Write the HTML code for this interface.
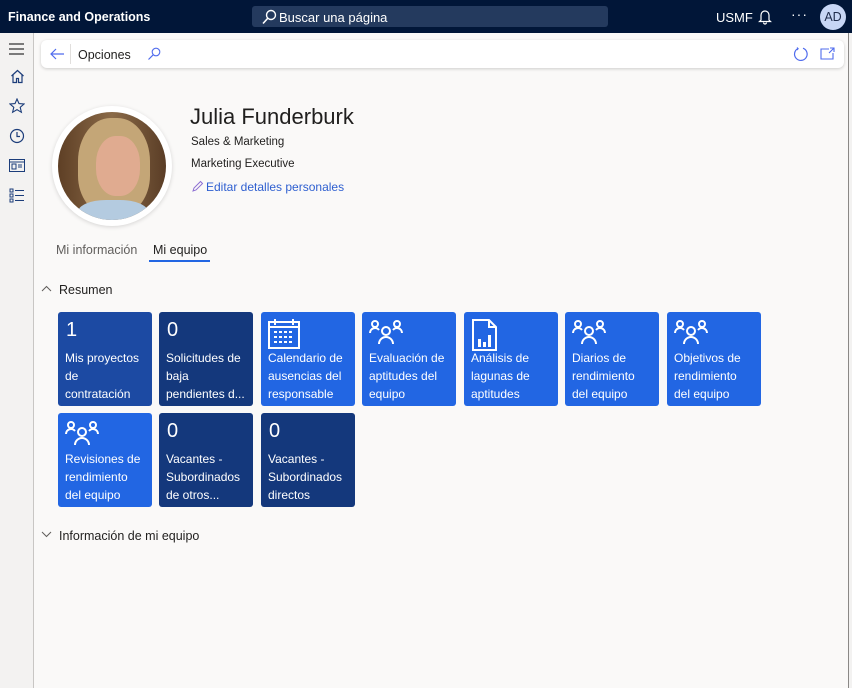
<!DOCTYPE html>
<html><head><meta charset="utf-8"><style>
*{box-sizing:border-box;margin:0;padding:0}
body{width:852px;height:688px;overflow:hidden;background:#faf9f8;font-family:"Liberation Sans",sans-serif;position:relative;color:#201f1e}
.top{position:absolute;left:0;top:0;width:852px;height:33px;background:#011638;color:#fff}
.abs{position:absolute}
.side{position:absolute;left:0;top:33px;width:34px;height:655px;background:#f3f2f1;border-right:1px solid #c8c6c4}
.bar{position:absolute;left:41px;top:40px;width:803px;height:28px;background:#fff;border-radius:6px;box-shadow:0 1px 3px rgba(0,0,0,.18)}
.tile{position:absolute;width:94px;height:94px;border-radius:3px;color:#fff;font-size:12px;line-height:18px;padding:0 7px}
.d1{background:#1c4aa3}.d2{background:#14387c}.b{background:#2266e3}
.tile .n{position:absolute;left:8px;top:9px;font-size:20px}
.tile .t{position:absolute;left:7px;top:37px;width:90px;white-space:nowrap}
.tile svg{position:absolute;left:7px;top:7px}
</style></head><body>
<div class="top">
 <div class="abs" style="left:8px;top:10px;font-size:12.5px;font-weight:bold">Finance and Operations</div>
 <div class="abs" style="left:252px;top:6px;width:356px;height:21px;background:#243a5e;border-radius:3px"></div>
 <svg class="abs" style="left:261px;top:9px" width="16" height="16" viewBox="0 0 16 16"><circle cx="10" cy="6" r="4.5" fill="none" stroke="#fff" stroke-width="1.4"/><path d="M7 9L2 14.5" stroke="#fff" stroke-width="1.6"/></svg>
 <div class="abs" style="left:279px;top:10px;font-size:13px">Buscar una página</div>
 <div class="abs" style="left:716px;top:10px;font-size:13px">USMF</div>
 <svg class="abs" style="left:758px;top:9px" width="14" height="16" viewBox="0 0 14 16"><path d="M3 11V6a4 4 0 0 1 8 0v5l1.5 1.5h-11z M5.5 13.5a1.5 1.5 0 0 0 3 0" fill="none" stroke="#fff" stroke-width="1.2"/></svg>
 <div class="abs" style="left:791px;top:6px;font-size:14px;letter-spacing:1px">···</div>
 <div class="abs" style="left:820px;top:4px;width:26px;height:26px;border-radius:50%;background:#c7d6f5;color:#1e2b4a;font-size:12.5px;text-align:center;line-height:26px">AD</div>
</div>
<div class="side">
 <svg class="abs" style="left:9px;top:10px" width="16" height="12"><path d="M0 1h15M0 6h15M0 11h15" stroke="#333" stroke-width="1.3"/></svg>
 <svg class="abs" style="left:10px;top:36px" width="15" height="15" viewBox="0 0 15 15"><path d="M1.5 7L7.5 1.5 13.5 7M3 6v7.5h3.5v-4h2v4H12V6" fill="none" stroke="#1c3d7a" stroke-width="1.2"/></svg>
 <svg class="abs" style="left:9px;top:65px" width="16" height="16" viewBox="0 0 16 16"><path d="M8 1l2 4.6 5 .4-3.8 3.3 1.2 5L8 11.7 3.6 14.3l1.2-5L1 6l5-.4z" fill="none" stroke="#1c3d7a" stroke-width="1.1"/></svg>
 <svg class="abs" style="left:9px;top:95px" width="16" height="16" viewBox="0 0 16 16"><circle cx="8" cy="8" r="6.5" fill="none" stroke="#1c3d7a" stroke-width="1.2"/><path d="M8 4v4.5h3" fill="none" stroke="#1c3d7a" stroke-width="1.2"/></svg>
 <svg class="abs" style="left:9px;top:126px" width="16" height="13" viewBox="0 0 16 13"><rect x=".5" y=".5" width="15" height="12" fill="none" stroke="#1c3d7a"/><path d="M.5 3h15M3 5h4v5H3zM9 6h4M9 8h4" fill="none" stroke="#1c3d7a"/></svg>
 <svg class="abs" style="left:9px;top:155px" width="16" height="15" viewBox="0 0 16 15"><path d="M1 1h3v3H1zM1 6h3v3H1zM1 11h3v3H1zM6 2.5h9M6 7.5h9M6 12.5h9" fill="none" stroke="#1c3d7a"/></svg>
</div>
<div class="abs" style="left:848px;top:33px;width:4px;height:655px;background:#f3f2f1;border-left:1px solid #8a8886"></div>
<div class="bar">
 <svg class="abs" style="left:8px;top:6px" width="16" height="16" viewBox="0 0 16 16"><path d="M15 8H2M7 3L2 8l5 5" fill="none" stroke="#4f6bed" stroke-width="1.2"/></svg>
 <div class="abs" style="left:29px;top:4px;width:1px;height:20px;background:#e1dfdd"></div>
 <div class="abs" style="left:37px;top:8px;font-size:12.5px">Opciones</div>
 <svg class="abs" style="left:106px;top:7px" width="14" height="14" viewBox="0 0 14 14"><circle cx="9" cy="5" r="3.8" fill="none" stroke="#4f6bed" stroke-width="1.1"/><path d="M6.3 7.7L1.5 12.5" stroke="#4f6bed" stroke-width="1.2"/></svg>
 <svg class="abs" style="left:752px;top:6px" width="16" height="16" viewBox="0 0 16 16"><path d="M10 2.2A6.3 6.3 0 1 1 5 2.5" fill="none" stroke="#4f6bed" stroke-width="1.2"/><path d="M4 1.5l1.2 1.2-1.2 1.3" fill="none" stroke="#4f6bed"/></svg>
 <svg class="abs" style="left:779px;top:7px" width="15" height="13" viewBox="0 0 15 13"><path d="M9 2H1v10h12V6M10 1h4v4M14 1L9 6" fill="none" stroke="#4f6bed" stroke-width="1.1"/></svg>
</div>
<div class="abs" style="left:52px;top:106px;width:120px;height:120px;border-radius:50%;background:#fff;box-shadow:0 1px 4px rgba(0,0,0,.15)"></div>
<div class="abs" style="left:58px;top:112px;width:108px;height:108px;border-radius:50%;overflow:hidden;background:linear-gradient(90deg,#5e3f25,#8a6a48 50%,#5a3d26)">
 <div class="abs" style="left:20px;top:6px;width:72px;height:96px;border-radius:45% 45% 40% 40%;background:#c4a677"></div>
 <div class="abs" style="left:38px;top:24px;width:44px;height:60px;border-radius:45%;background:#e0ab90"></div>
 <div class="abs" style="left:20px;top:88px;width:70px;height:30px;border-radius:40% 40% 0 0;background:#b4cbe0"></div>
</div>
<div class="abs" style="left:190px;top:104px;font-size:22px;color:#201f1e">Julia Funderburk</div>
<div class="abs" style="left:191px;top:136px;font-size:11.5px">Sales &amp; Marketing</div>
<div class="abs" style="left:191px;top:158px;font-size:11.5px">Marketing Executive</div>
<svg class="abs" style="left:191px;top:180px" width="13" height="13" viewBox="0 0 13 13"><path d="M2 11l1-3 6.5-6.5 2 2L5 10z" fill="none" stroke="#8d6fd3" stroke-width="1"/></svg>
<div class="abs" style="left:206px;top:180px;font-size:12px;color:#2e5fd0">Editar detalles personales</div>
<div class="abs" style="left:56px;top:243px;font-size:12.5px;color:#605e5c">Mi información</div>
<div class="abs" style="left:153px;top:243px;font-size:12.5px">Mi equipo</div>
<div class="abs" style="left:149px;top:260px;width:61px;height:2px;background:#2266e3"></div>
<svg class="abs" style="left:41px;top:285px" width="11" height="7"><path d="M1 6l4.5-4.5L10 6" fill="none" stroke="#605e5c"/></svg>
<div class="abs" style="left:59px;top:283px;font-size:12.5px">Resumen</div>

<div class="tile d1" style="left:58px;top:312px"><div class="n">1</div><div class="t">Mis proyectos<br>de<br>contratación</div></div>
<div class="tile d2" style="left:159px;top:312px"><div class="n">0</div><div class="t">Solicitudes de<br>baja<br>pendientes d...</div></div>
<div class="tile b" style="left:261px;top:312px"><svg width="33" height="30" viewBox="0 0 33 30"><rect x="1" y="3" width="30" height="26" fill="none" stroke="#fff" stroke-width="2"/><path d="M1 8h30M7 0v6M25 0v6" stroke="#fff" stroke-width="2"/><g fill="#fff"><rect x="6" y="12" width="3" height="2"/><rect x="11" y="12" width="3" height="2"/><rect x="16" y="12" width="3" height="2"/><rect x="21" y="12" width="3" height="2"/><rect x="6" y="17" width="3" height="2"/><rect x="11" y="17" width="3" height="2"/><rect x="16" y="17" width="3" height="2"/><rect x="21" y="17" width="3" height="2"/><rect x="6" y="22" width="3" height="2"/><rect x="11" y="22" width="3" height="2"/><rect x="16" y="22" width="3" height="2"/><rect x="21" y="22" width="3" height="2"/></g></svg><div class="t">Calendario de<br>ausencias del<br>responsable</div></div>
<div class="tile b" style="left:362px;top:312px"><svg width="34" height="26" viewBox="0 0 34 26"><g fill="none" stroke="#fff" stroke-width="2"><circle cx="6" cy="5" r="3"/><circle cx="28" cy="5" r="3"/><circle cx="17" cy="12" r="4"/><path d="M1 14a5 5 0 0 1 9-3M33 14a5 5 0 0 0-9-3M10 25a7 7 0 0 1 14 0"/></g></svg><div class="t">Evaluación de<br>aptitudes del<br>equipo</div></div>
<div class="tile b" style="left:464px;top:312px"><svg width="28" height="32" viewBox="0 0 28 32"><path d="M2 1h16l7 7v23H2z M18 1v7h7" fill="none" stroke="#fff" stroke-width="2"/><path d="M7 20h3v8H7zM12 23h3v5h-3zM17 16h3v12h-3z" fill="#fff"/></svg><div class="t">Análisis de<br>lagunas de<br>aptitudes</div></div>
<div class="tile b" style="left:565px;top:312px"><svg width="34" height="26" viewBox="0 0 34 26"><g fill="none" stroke="#fff" stroke-width="2"><circle cx="6" cy="5" r="3"/><circle cx="28" cy="5" r="3"/><circle cx="17" cy="12" r="4"/><path d="M1 14a5 5 0 0 1 9-3M33 14a5 5 0 0 0-9-3M10 25a7 7 0 0 1 14 0"/></g></svg><div class="t">Diarios de<br>rendimiento<br>del equipo</div></div>
<div class="tile b" style="left:667px;top:312px"><svg width="34" height="26" viewBox="0 0 34 26"><g fill="none" stroke="#fff" stroke-width="2"><circle cx="6" cy="5" r="3"/><circle cx="28" cy="5" r="3"/><circle cx="17" cy="12" r="4"/><path d="M1 14a5 5 0 0 1 9-3M33 14a5 5 0 0 0-9-3M10 25a7 7 0 0 1 14 0"/></g></svg><div class="t">Objetivos de<br>rendimiento<br>del equipo</div></div>
<div class="tile b" style="left:58px;top:413px"><svg width="34" height="26" viewBox="0 0 34 26"><g fill="none" stroke="#fff" stroke-width="2"><circle cx="6" cy="5" r="3"/><circle cx="28" cy="5" r="3"/><circle cx="17" cy="12" r="4"/><path d="M1 14a5 5 0 0 1 9-3M33 14a5 5 0 0 0-9-3M10 25a7 7 0 0 1 14 0"/></g></svg><div class="t">Revisiones de<br>rendimiento<br>del equipo</div></div>
<div class="tile d2" style="left:159px;top:413px"><div class="n">0</div><div class="t">Vacantes -<br>Subordinados<br>de otros...</div></div>
<div class="tile d2" style="left:261px;top:413px"><div class="n">0</div><div class="t">Vacantes -<br>Subordinados<br>directos</div></div>

<svg class="abs" style="left:41px;top:531px" width="11" height="7"><path d="M1 1l4.5 4.5L10 1" fill="none" stroke="#605e5c"/></svg>
<div class="abs" style="left:59px;top:529px;font-size:12.5px">Información de mi equipo</div>
</body></html>
